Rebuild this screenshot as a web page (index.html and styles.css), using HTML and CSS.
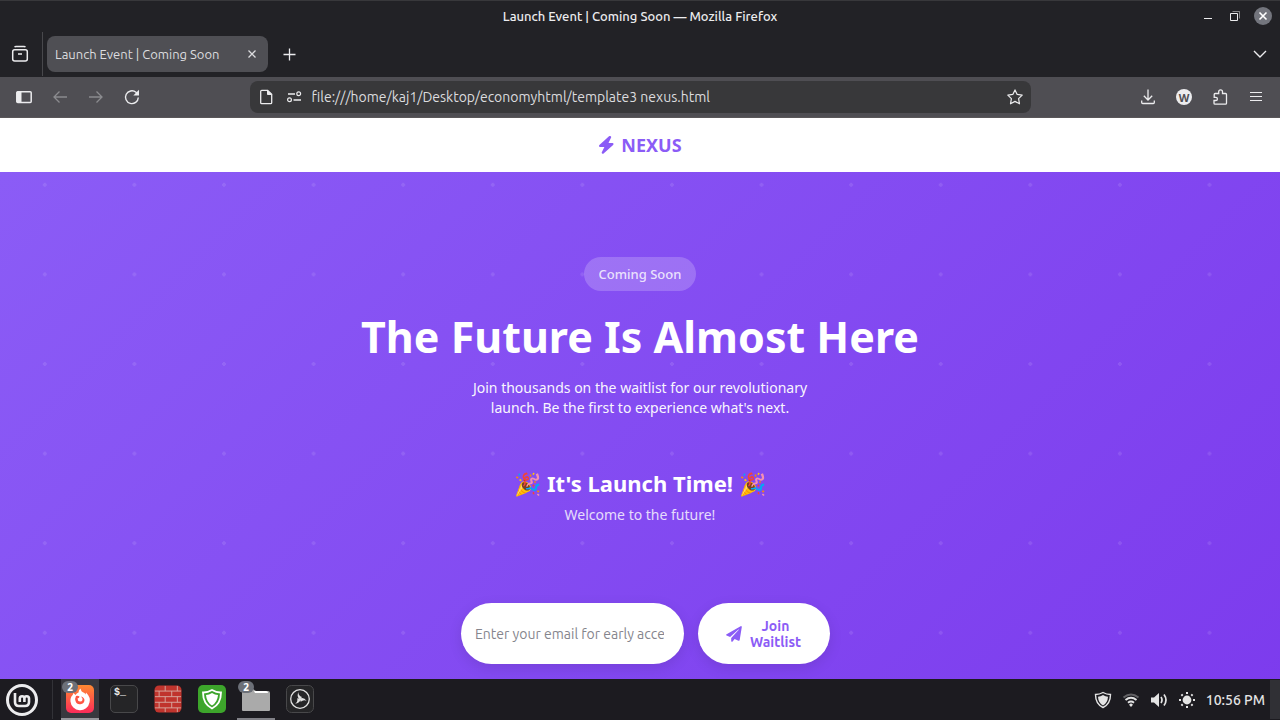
FILE: index.html
```html
<!DOCTYPE html>
<html lang="en">
<head>
    <meta charset="UTF-8">
    <meta name="viewport" content="width=device-width, initial-scale=1.0">
    <title>Launch Event | Coming Soon</title>
    <link rel="stylesheet" href="styles.css">
</head>
<body>
    <!-- Window title -->
    <div class="titlebar">
        <div class="window-title">Launch Event | Coming Soon — Mozilla Firefox</div>
        <div class="window-controls">
            <button class="icon-btn" aria-label="Minimize"><svg width="16" height="16" viewBox="0 0 16 16"><path d="M4 10.5h8"/></svg></button>
            <button class="icon-btn" aria-label="Restore"><svg width="16" height="16" viewBox="0 0 16 16"><path d="M3.500 5.500h7v7h-7z"/><path d="M5.500 3.500h7v7" opacity=".5"/></svg></button>
            <button class="icon-btn window-close" aria-label="Close"><svg width="18" height="18" viewBox="0 0 18 18"><path d="M5.500 5.500l7 7M12.500 5.500l-7 7" stroke-width="1.600"/></svg></button>
        </div>
    </div>

    <!-- Tabs -->
    <div class="tabbar">
        <button class="icon-btn recent" aria-label="View recent browsing"><svg width="18" height="18" viewBox="0 0 18 18"><path d="M3.700 2.200Q4 1.500 5 1.500h8q1 0 1.300.700" stroke-width="1.500"/><rect x="1.700" y="4.700" width="14.600" height="11.300" rx="2" stroke-width="1.500"/><path d="M7 9h4" stroke-width="1.500"/></svg></button>
        <div class="tab">
            <span>Launch Event | Coming Soon</span>
            <button class="icon-btn" aria-label="Close tab"><svg width="16" height="16" viewBox="0 0 16 16"><path d="M4.500 4.500l7 7M11.500 4.500l-7 7" stroke-width="1.300"/></svg></button>
        </div>
        <button class="icon-btn new-tab" aria-label="New tab"><svg width="16" height="16" viewBox="0 0 16 16"><path d="M8.500 2.500v12M2.500 8.500h12" stroke-width="1.300"/></svg></button>
        <button class="icon-btn all-tabs" aria-label="List all tabs"><svg width="16" height="16" viewBox="0 0 16 16"><path d="M2 5l6 6 6-6" stroke-width="1.400"/></svg></button>
    </div>

    <!-- Navigation -->
    <div class="toolbar">
        <div class="nav-buttons">
            <button class="icon-btn" aria-label="Sidebar"><svg width="16" height="16" viewBox="0 0 16 16"><rect x=".800" y="2.800" width="14.400" height="10.600" rx="1" stroke-width="1.500"/><path d="M1 3h4v10H1z" fill="currentColor"/></svg></button>
            <button class="icon-btn" aria-label="Back" disabled><svg width="16" height="16" viewBox="0 0 16 16"><path d="M15 8H2M7.500 2.500L2 8l5.500 5.500" stroke-width="1.300"/></svg></button>
            <button class="icon-btn" aria-label="Forward" disabled><svg width="16" height="16" viewBox="0 0 16 16"><path d="M1 8h13M8.500 2.500L14 8l-5.500 5.500" stroke-width="1.300"/></svg></button>
            <button class="icon-btn" aria-label="Reload"><svg width="16" height="16" viewBox="0 0 16 16"><path d="M14.300 8.500A6.400 6.400 0 1 1 12 3.300l1.500 1.500" stroke-width="1.400"/><path d="M15 .800v5.700H9.300z" fill="currentColor" stroke="none"/></svg></button>
        </div>
        <div class="urlbar">
            <svg width="16" height="16" viewBox="0 0 16 16"><path d="M3.700 1.300h6l4 4v8.400q0 1-1 1h-9q-1 0-1-1V2.300q0-1 1-1z" stroke-width="1.300"/><path d="M9.500 1.500v4h4z" fill="currentColor"/></svg>
            <svg width="16" height="16" viewBox="0 0 16 16"><circle cx="12.700" cy="4.700" r="1.900" stroke-width="1.200"/><path d="M2 5h7M7.500 11H15" stroke-width="1.300"/><circle cx="3.500" cy="10.800" r="1.900" stroke-width="1.200"/></svg>
            <input type="text" aria-label="Address" value="file:///home/kaj1/Desktop/economyhtml/template3 nexus.html">
            <button class="icon-btn" aria-label="Bookmark"><svg width="16" height="16" viewBox="0 0 16 16"><path d="M8 .900l2.200 4.500 5 .7-3.600 3.500.9 5.200L8 12.400l-4.500 2.400.9-5.200L.800 6.100l5-.7z" stroke-width="1.200" stroke-linejoin="round"/></svg></button>
        </div>
        <div class="nav-buttons">
            <button class="icon-btn" aria-label="Downloads"><svg width="16" height="16" viewBox="0 0 16 16"><path d="M8 .500V11M3.800 6.800L8 11l4.200-4.200M1.700 11.500v2q0 1 1 1h10.600q1 0 1-1v-2" stroke-width="1.300"/></svg></button>
            <button class="icon-btn account" aria-label="Account">W</button>
            <button class="icon-btn" aria-label="Extensions"><svg width="16" height="16" viewBox="0 0 16 16"><path d="M3 15.200h10.500q1 0 1-1V5.500q0-1-1-1h-3V2.800a1.900 1.900 0 0 0-3.800 0v1.700H3.200q-1 0-1 1v2.800h1.600a1.500 1.500 0 0 1 0 3.200H2v2.700q0 1 1 1z" stroke-width="1.300"/></svg></button>
            <button class="icon-btn" aria-label="Menu"><svg width="16" height="16" viewBox="0 0 16 16"><path d="M2 3.500h12M2 7.500h12M2 11.500h12" stroke-width="1.200"/></svg></button>
        </div>
    </div>

    <div class="page">
        <header class="header">
            <a class="logo" href="#">
                <svg width="16" height="18" viewBox="0 0 16 18"><path d="M12.300 0q1.200.4.8 1.500L10.500 7h4q1 .1 1 1 0 .5-.4.900L5.600 17.500q-.5.5-1.200.2-1-.4-.6-1.500L6.400 11H2q-1-.1-1-1 0-.5.4-.900L11 .300q.6-.5 1.300-.300z"/></svg>
                <span>NEXUS</span>
            </a>
        </header>

        <main class="hero">
            <div class="badge">Coming Soon</div>
            <h1>The Future Is Almost Here</h1>
            <p class="subtitle">Join thousands on the waitlist for our revolutionary launch. Be the first to experience what's next.</p>

            <div class="countdown">
                <h2>🎉 It's Launch Time! 🎉</h2>
                <p>Welcome to the future!</p>
            </div>

            <form class="signup-form">
                <input type="email" aria-label="Email" placeholder="Enter your email for early access">
                <button type="submit">
                    <svg width="16" height="16" viewBox="0 0 16 16"><path d="M14.600.200q1-.4 1.200.700L13.700 14q-.2 1-1.200.7L8.600 13l-2 2.600q-.3.400-.9.200-.5-.2-.5-.8v-3l7.600-8.300q.1-.5-.4-.2L4.100 11 .600 9.500q-1-.6 0-1.300z"/></svg>
                    <span>Join Waitlist</span>
                </button>
            </form>
        </main>
    </div>

    <!-- Desktop panel -->
    <div class="taskbar">
        <button class="icon-btn start" aria-label="Menu"><svg width="34" height="34" viewBox="0 0 34 34"><circle cx="17" cy="17" r="14.500" stroke-width="3"/><path d="M10 10v9q0 4 4 4h6q4 0 4-4v-3.500a2.300 2.300 0 0 0-4.600 0V19v-3.500a2.300 2.300 0 0 0-4.600 0V19" stroke-width="2.600"/></svg></button>
        <div class="apps">
            <button class="app focused" aria-label="Firefox">
                <svg width="28" height="28" viewBox="0 0 28 28"><defs><linearGradient id="fire" x2="0" y2="1"><stop stop-color="#ff8a32"/><stop offset="1" stop-color="#fb2b59"/></linearGradient></defs><rect width="28" height="28" rx="5" fill="url(#fire)"/><path d="M7.500 8l2 2q1-2 3-2.500 0-2.500 2-4 .5 3.500 4 4.500l1 1.500.5-2q5 5 3.500 10a9.600 9.600 0 0 1-19-1q-.5-4 2.200-6.500z" fill="#fff"/><path d="M10 11q2-.5 3.500.5 0 1.500-2 2 0 2.500 2.500 3 2 0 2.500-1.500.5-2-1.500-3.500 3 .5 3.500 3.500a4.600 4.600 0 0 1-9 1q-.8-2.500.5-5z" fill="#ff5643"/></svg>
                <span class="count">2</span>
            </button>
            <button class="app" aria-label="Terminal"><span class="terminal">$_</span></button>
            <button class="app" aria-label="Firewall">
                <svg width="28" height="28" viewBox="0 0 30 30"><rect x=".500" y=".500" width="29" height="29" rx="5" fill="#c0342d"/><path d="M1 6.500h28M1 12.500h28M1 18.500h28M1 24.500h28M12 1v5.500M25 1v5.500M5.500 6.500v6M19 6.500v6M12 12.500v6M25 12.500v6M5.500 18.500v6M19 18.500v6M12 24.500V29M25 24.500V29" stroke="#d7aaa1"/></svg>
            </button>
            <button class="app" aria-label="Update Manager">
                <svg width="28" height="28" viewBox="0 0 28 28"><rect width="28" height="28" rx="5" fill="#3da52b"/><path d="M14 5q4.500 2.700 9 2.500 0 11.500-9 16-9-4.500-9-16 4.500.2 9-2.500z" stroke="#fff" stroke-width="1.800"/><path d="M14 8q3 1.800 6 2-.5 7-6 10.500Q8.500 17 8 10q3-.2 6-2z" fill="#fff"/></svg>
            </button>
            <button class="app running" aria-label="Files">
                <svg width="28" height="28" viewBox="0 0 28 28"><path d="M0 5q0-1 1-1h10l3 2h12q2 0 2 2v17q0 1-1 1H1q-1 0-1-1z" fill="#aaa"/><path d="M12 6h12q2 0 2 2H13z" fill="#fff"/></svg>
                <span class="count">2</span>
            </button>
            <button class="app" aria-label="OBS Studio">
                <svg width="28" height="28" viewBox="0 0 28 28"><rect x=".500" y=".500" width="27" height="27" rx="5" fill="#252527" stroke="#48484a"/><circle cx="14" cy="14" r="9.300" stroke="#e2e2e2" stroke-width="1.300"/><g id="blade"><path d="M14 14.500Q10 12 12.500 7q-.5 3.500 3.500 5z" fill="#e2e2e2"/></g><use href="#blade" transform="rotate(120 14 14)"/><use href="#blade" transform="rotate(240 14 14)"/></svg>
            </button>
        </div>
        <div class="tray">
            <svg width="18" height="18" viewBox="0 0 18 18"><path d="M9 1.500q3.500 2 7.500 2 0 9.500-7.500 13-7.500-3.500-7.500-13 4 0 7.500-2z" stroke-width="1.400"/><path d="M9 4q2.500 1.500 5 1.700-.3 6-5 8.800-4.700-2.800-5-8.800Q6.500 5.500 9 4z" fill="currentColor" stroke="none"/></svg>
            <svg width="18" height="18" viewBox="0 0 18 18"><path d="M1.500 6.500q7.500-6 15 0" stroke-width="2" opacity=".35"/><path d="M3.500 9q5.500-4.400 11 0M6 11.700q3-2.400 6 0" stroke-width="2"/><path d="M9 12.300l2 1.500L9 16l-2-2.200z" fill="currentColor" stroke="none"/></svg>
            <svg width="18" height="18" viewBox="0 0 18 18"><path d="M1 6.500h3L9 2v14l-5-4.500H1z" fill="currentColor" stroke="none"/><path d="M11 6q2 3 0 6M14 3.500q4 5.500 0 11" stroke-width="1.700"/></svg>
            <svg width="18" height="18" viewBox="0 0 18 18"><circle cx="9" cy="9" r="4.400" fill="currentColor" stroke="none"/><path d="M9 1v2M9 15v2M1 9h2M15 9h2M3.400 3.400l1.300 1.300M13.300 13.300l1.300 1.300M3.400 14.600l1.300-1.300M13.300 4.700l1.300-1.300" stroke-width="2"/></svg>
            <span class="clock">10:56 PM</span>
        </div>
        <div class="show-desktop"></div>
    </div>
</body>
</html>
```
FILE: styles.css
```css
* {
    margin: 0;
    padding: 0;
    box-sizing: border-box;
}
body {
    font-family: Ubuntu, "Noto Sans", sans-serif;
    height: 100vh;
    display: flex;
    flex-direction: column;
    overflow: hidden;
    background-color: #222226;
    color: #ececee;
}
svg {
    display: block;
    flex-shrink: 0;
    fill: none;
    stroke: currentColor;
}
.icon-btn {
    display: flex;
    align-items: center;
    justify-content: center;
    background: none;
    border: none;
    color: inherit;
}
.icon-btn:disabled {
    color: #8b8b8f;
}

/* Title bar */
.titlebar {
    flex: 0 0 32px;
    display: grid;
    grid-template-columns: 1fr auto 1fr;
    align-items: center;
    padding-bottom: 2px;
    border-top: 1px solid #38383b;
    font-size: 13px;
    font-weight: 500;
}
.window-title {
    grid-column: 2;
}
.window-controls {
    display: flex;
    align-items: center;
    justify-content: flex-end;
    gap: 11px;
    padding-right: 8px;
}
.window-close {
    border-radius: 50%;
    background-color: #73757d;
    color: #fff;
}

/* Tabs */
.tabbar {
    flex: 0 0 45px;
    display: flex;
    align-items: center;
    padding-bottom: 1px;
}
.recent {
    width: 43px;
    height: 44px;
    padding-right: 2px;
    border-right: 1px solid #48484c;
}
.tab {
    width: 221px;
    height: 36px;
    margin-left: 4px;
    padding: 0 8px;
    display: flex;
    align-items: center;
    justify-content: space-between;
    border-radius: 8px;
    background-color: #4f4f54;
    color: #dcdcdf;
    font-size: 13px;
    white-space: nowrap;
}
.new-tab {
    margin-left: 13px;
}
.all-tabs {
    margin-left: auto;
    margin-right: 12px;
}

/* Toolbar */
.toolbar {
    flex: 0 0 41px;
    display: flex;
    align-items: center;
    justify-content: space-between;
    padding: 0 16px;
    background-color: #4f4e53;
    border-bottom: 1px solid #5a5759;
}
.nav-buttons {
    width: 124px;
    display: flex;
    align-items: center;
    gap: 20px;
}
.urlbar {
    width: 64%;
    max-width: 781px;
    height: 32px;
    padding: 0 8px;
    display: flex;
    align-items: center;
    gap: 12px;
    border-radius: 8px;
    background-color: #38383a;
}
.urlbar input {
    flex: 1;
    min-width: 0;
    height: 24px;
    margin-left: -2px;
    background: none;
    border: none;
    outline: none;
    color: #dcdcdf;
    font-family: inherit;
    font-size: 14px;
}
.account {
    width: 16px;
    height: 16px;
    border-radius: 50%;
    background-color: #ececee;
    color: #4f4e53;
    font-family: "Noto Sans", sans-serif;
    font-size: 11px;
    font-weight: bold;
}

/* Page */
.page {
    flex: 1;
    min-height: 0;
    overflow: hidden;
    display: flex;
    flex-direction: column;
    font-family: "Noto Sans", sans-serif;
}
.header {
    flex: 0 0 54px;
    display: flex;
    align-items: center;
    justify-content: center;
    background-color: #fff;
}
.logo {
    display: flex;
    align-items: center;
    gap: 7px;
    color: #8b5cf6;
    font-size: 18px;
    font-weight: bold;
    text-decoration: none;
}
.logo svg,
.signup-form svg {
    fill: currentColor;
    stroke: none;
}
.hero {
    flex: 1 0 auto;
    display: flex;
    flex-direction: column;
    align-items: center;
    padding: 85px 20px 16px;
    text-align: center;
    color: #fff;
    background-image:
        radial-gradient(circle, rgba(255, 255, 255, 0.1) 2px, transparent 2px),
        linear-gradient(135deg, #8b5cf6 0%, #7c3aed 100%);
    background-size: 7vw 7vw, 100% 115%;
    background-position: 0 -32px, 0 0;
}
.badge {
    padding: 7px 15px;
    border-radius: 50px;
    background-color: rgba(255, 255, 255, 0.2);
    color: rgba(255, 255, 255, 0.8);
    font-size: 13px;
    font-weight: 500;
    line-height: 20px;
}
.hero h1 {
    margin-top: 20px;
    font-size: 43px;
    line-height: 52px;
}
.subtitle {
    max-width: 360px;
    margin-top: 15px;
    font-size: 14px;
    line-height: 20px;
    opacity: 0.95;
}
.countdown {
    margin-top: 50px;
}
.countdown h2 {
    font-size: 22px;
    line-height: 30px;
}
.countdown p {
    margin-top: 7px;
    font-size: 14px;
    line-height: 20px;
    opacity: 0.8;
}
.signup-form {
    width: 358px;
    margin-top: 78px;
    display: flex;
    gap: 14px;
}
.signup-form input,
.signup-form button {
    flex-shrink: 0;
    height: 61px;
    border: none;
    border-radius: 50px;
    background-color: #fff;
    font-family: Ubuntu, "Noto Sans", sans-serif;
    font-size: 14px;
    box-shadow: 0 4px 14px rgba(0, 0, 0, 0.1);
}
.signup-form input {
    width: 223px;
    padding: 0 20px 0 14px;
}
.signup-form input::placeholder {
    color: #85858d;
}
.signup-form button {
    width: 132px;
    display: flex;
    align-items: center;
    justify-content: center;
    gap: 7px;
    padding: 0 28px;
    color: #8b5cf6;
    font-weight: bold;
    line-height: 16px;
}

/* Taskbar */
.taskbar {
    flex: 0 0 41px;
    display: flex;
    align-items: center;
    background-color: #1c1b20;
}
.start {
    width: 53px;
    height: 39px;
    padding-right: 8px;
    border-right: 1px solid #323237;
}
.apps {
    display: flex;
    gap: 6px;
    margin-left: 8px;
}
.app {
    position: relative;
    width: 38px;
    height: 41px;
    display: flex;
    align-items: center;
    justify-content: center;
    background: none;
    border: none;
    border-bottom: 2px solid transparent;
}
.app svg {
    stroke: none;
}
.focused {
    background-color: #38383e;
    border-color: #96969b;
}
.running {
    border-color: #818187;
}
.count {
    position: absolute;
    top: 2px;
    left: 1px;
    width: 16px;
    border-radius: 8px;
    background-color: #6c7078;
    color: #fff;
    font-family: "Noto Sans", sans-serif;
    font-size: 10px;
    font-weight: bold;
    line-height: 12px;
}
.terminal {
    width: 28px;
    height: 28px;
    padding: 1px 3px;
    border: 1px solid #48484a;
    border-radius: 5px;
    background-color: #252527;
    color: #eee;
    font-family: "Liberation Mono", monospace;
    font-size: 10px;
    font-weight: bold;
    text-align: left;
}
.tray {
    margin-left: auto;
    display: flex;
    align-items: center;
    gap: 10px;
    color: #e4e4e4;
}
.clock {
    font-size: 14px;
    font-weight: 500;
}
.show-desktop {
    width: 10px;
    height: 39px;
    margin-left: 5px;
    background-color: #303035;
}
```
